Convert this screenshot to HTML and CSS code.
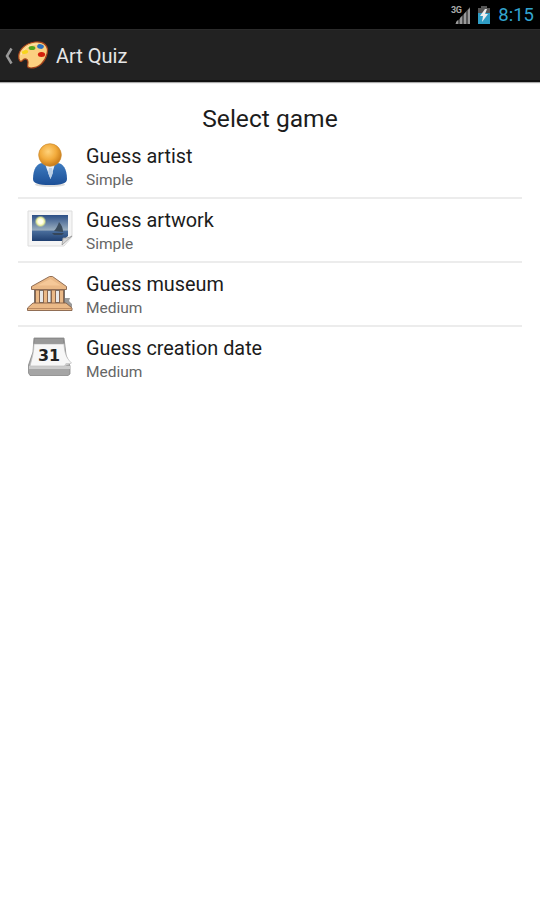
FILE: index.html
```html
<!DOCTYPE html>
<html lang="en">
  <head>
    <meta charset="UTF-8" />
    <meta name="viewport" content="width=device-width, initial-scale=1.0" />
    <title>Art Quiz</title>
    <link rel="stylesheet" href="styles.css">
  </head>
  <body>
    <div class="status-bar">
      <svg class="signal" width="22" height="24" viewBox="0 0 22 24">
        <path d="M5 21L20 4V21Z" fill="#555" />
        <path d="M6 21v-2l2-2v4zM10 21v-6l2-2v8zM14 21v-10l2-2v12zM18 21v-14l2-2v16z" fill="#999" />
        <text x="1" y="10" font-size="9" font-weight="bold" textLength="11" fill="#aaa">3G</text>
      </svg>
      <svg class="battery" width="14" height="20" viewBox="0 0 14 20">
        <path d="M4 1h6v2h3v6H1V3h3z" fill="#555" />
        <path d="M1 8h12v11H1z" fill="#2f9dc5" />
        <path d="M8 4L3 11h3l-1 6 6-8H8l2-5z" fill="#eee" />
      </svg>
      <span class="clock">8:15</span>
    </div>

    <div class="action-bar">
      <svg class="back" width="9" height="20" viewBox="0 0 9 20">
        <path d="M6.500 3.500L2 11L6.500 18.500" fill="none" stroke="#999" stroke-width="2.500" />
      </svg>
      <svg class="palette" width="34" height="30" viewBox="0 0 34 30">
        <path d="M3 19C1 11 9 3 19 2C29 1 33 7 31 14C29 22 23 28 15 28C10 28 12 25 12 22C12 19 9 18 7 20C5 22 4 22 3 19Z" fill="#fbd080" stroke="#a5431b" stroke-width="1.2" />
        <path d="M5 15C7 8 15 4 22 4" fill="none" stroke="#ffe9b0" stroke-width="1" />
        <ellipse cx="9" cy="12" rx="3.2" ry="1.9" fill="#f8d51c" transform="rotate(-15 9 12)" />
        <ellipse cx="16" cy="8" rx="3.4" ry="2" fill="#55a51c" />
        <ellipse cx="24.500" cy="6.500" rx="3.400" ry="2.300" fill="#2d70bd" transform="rotate(10 24.500 6.500)" />
        <ellipse cx="25.500" cy="14.500" rx="3.600" ry="2.500" fill="#d4200c" />
      </svg>
      <span class="app-title">Art Quiz</span>
    </div>

    <div class="content">
      <h1>Select game</h1>
      <ul class="game-list">
        <li class="game">
          <svg class="game-icon" viewBox="0 0 60 60">
            <defs>
              <radialGradient id="head" cx=".42" cy=".35" r=".65">
                <stop offset="0" stop-color="#ffd27a" />
                <stop offset=".55" stop-color="#f2ab3c" />
                <stop offset="1" stop-color="#c87a18" />
              </radialGradient>
              <linearGradient id="coat" x2="0" y2="1">
                <stop offset="0" stop-color="#3f7cc0" />
                <stop offset="1" stop-color="#1c4f97" />
              </linearGradient>
            </defs>
            <ellipse cx="30" cy="49.500" rx="15" ry="2.500" fill="#ddd" />
            <path d="M13 44C13 34 17 28 23 28H37C43 28 47 34 47 44C47 48 42 50 30 50C18 50 13 48 13 44Z" fill="url(#coat)" />
            <path d="M25 29L30.500 44L35 29Z" fill="#e8eff7" />
            <path d="M29 33h3l1 5-2.500 6-2.500-6z" fill="#bdd0e6" />
            <circle cx="30" cy="20" r="11.300" fill="url(#head)" stroke="#cc8a2c" stroke-width=".7" />
          </svg>
          <div class="game-text">
            <div class="game-name">Guess artist</div>
            <div class="game-level">Simple</div>
          </div>
        </li>
        <li class="game">
          <svg class="game-icon" viewBox="0 -1 60 60">
            <defs>
              <linearGradient id="sky" x2="0" y2="1">
                <stop offset="0" stop-color="#2c4f86" />
                <stop offset=".58" stop-color="#9aaebf" />
                <stop offset=".62" stop-color="#496d9c" />
                <stop offset="1" stop-color="#1f3f70" />
              </linearGradient>
              <radialGradient id="moon">
                <stop offset=".35" stop-color="#fffff0" />
                <stop offset=".65" stop-color="#eef2a0" />
                <stop offset="1" stop-color="#b8c98a" stop-opacity="0" />
              </radialGradient>
            </defs>
            <path d="M8 11H52V37L44 46H8Z" fill="#f5f5f5" stroke="#ddd" stroke-width="1" />
            <path d="M12 15H48V36L42 41H12Z" fill="url(#sky)" />
            <circle cx="20.500" cy="21.500" r="6" fill="url(#moon)" />
            <path d="M34 31C36 29 38 25 39 22C42 25 43 29 43 32Z" fill="#3b4c5c" />
            <path d="M32 33h12l-2 2h-8z" fill="#35465a" />
            <path d="M42 45L43 38C46 38 49 38 52 36Z" fill="#d5d5d5" stroke="#999" stroke-width=".8" />
          </svg>
          <div class="game-text">
            <div class="game-name">Guess artwork</div>
            <div class="game-level">Simple</div>
          </div>
        </li>
        <li class="game">
          <svg class="game-icon" viewBox="0 -2 60 60">
            <path d="M45 33h5l-1 3 3 3v3h-7z" fill="#999" />
            <path d="M14 25H45V40H14Z" fill="#77706a" />
            <path d="M20 26h3v11h-3zM28 26h2.500v11h-2.500zM36 26h3v11h-3z" fill="#e8e8e8" />
            <g fill="#eab987" stroke="#866148" stroke-width=".9">
              <path d="M15.500 25h4v14h-4zM23.500 25h4v14h-4zM31.500 25h4v14h-4zM39.500 25h4v14h-4z" />
              <path d="M11.500 21.500L29.500 11.500H32.500L46.500 21.500V24.500H11.500Z" />
              <path d="M13 38H46L52 43V45.500H7.500V43Z" />
            </g>
            <path d="M17 20.500L30.500 14L41 20.500Z" fill="#f5c898" />
            <path d="M8 43.500H51.500" stroke="#bd8b62" stroke-width="1" />
          </svg>
          <div class="game-text">
            <div class="game-name">Guess museum</div>
            <div class="game-level">Medium</div>
          </div>
        </li>
        <li class="game">
          <svg class="game-icon" viewBox="0 2 60 60">
            <path d="M14 13H44L46 30L50 41V49L48 50.500H10L8.500 48V40L13 27Z" fill="#a5a5a5" stroke="#888" stroke-width=".8" />
            <path d="M9 41H50V44H9Z" fill="#ccc" />
            <path d="M14.500 13.500H43.500V18.500H14Z" fill="#999" stroke="#888" stroke-width=".8" />
            <path d="M14 19H44C44.500 27 46 33 51.500 38L44 41H10C12 33 14 27 14 19Z" fill="#f7f7f7" stroke="#bbb" stroke-width=".7" />
            <path d="M44 41L46 38L51.500 38Z" fill="#ccc" />
            <text class="day" x="18" y="36" textLength="22" lengthAdjust="spacingAndGlyphs">31</text>
          </svg>
          <div class="game-text">
            <div class="game-name">Guess creation date</div>
            <div class="game-level">Medium</div>
          </div>
        </li>
      </ul>
    </div>
  </body>
</html>
```

FILE: styles.css
```css
body {
  font-family: Roboto, "Liberation Sans", sans-serif;
  background-color: #fff;
  margin: 0;
  padding: 0;
}
.status-bar {
  display: flex;
  justify-content: flex-end;
  align-items: center;
  height: 29px;
  box-sizing: border-box;
  padding-right: 6px;
  background-color: #000;
}
.signal {
  margin-right: 5px;
}
.battery {
  margin-right: 7px;
}
.clock {
  padding-top: 1px;
  font-size: 18.500px;
  line-height: 28px;
  color: #33a5cf;
}
.action-bar {
  display: flex;
  align-items: center;
  height: 53px;
  box-sizing: border-box;
  padding-left: 5px;
  background-color: #222;
  border-top: 1px solid #2b2b2b;
  border-bottom: 2px solid #111;
  box-shadow: 0 1px 1px #aaa;
}
.back {
  margin-right: 2px;
}
.palette {
  margin-right: 6px;
}
.app-title {
  padding-top: 2px;
  font-size: 20px;
  color: #e6e6e6;
}
.content {
  padding: 21px 18px 0;
}
h1 {
  margin: 0;
  height: 32px;
  font-size: 24.600px;
  font-weight: 400;
  line-height: 31px;
  text-align: center;
  color: #1c1c1c;
}
.game-list {
  list-style: none;
  margin: 0;
  padding: 0;
}
.game {
  display: flex;
  height: 64px;
  box-sizing: border-box;
  padding-left: 2px;
  border-bottom: 2px solid #ececec;
}
.game:last-child {
  border-bottom: none;
}
.game-icon {
  flex: none;
  width: 60px;
  height: 60px;
  margin-right: 6px;
}
.game-text {
  padding-top: 9px;
}
.game-name {
  font-size: 19.850px;
  line-height: 26px;
  color: #1c1c1c;
}
.game-level {
  font-size: 15.500px;
  line-height: 21px;
  color: #666;
}
.day {
  font-family: "DejaVu Sans", sans-serif;
  font-size: 16px;
  font-weight: bold;
  fill: #222;
}
```
